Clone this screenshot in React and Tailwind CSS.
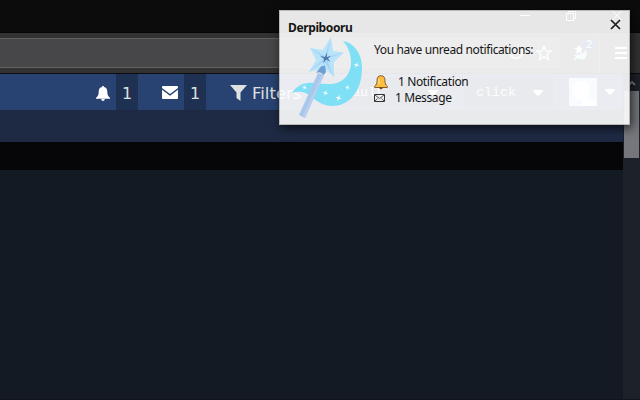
import React from "react";

function Bell({ className }) {
  return (
    <svg viewBox="0 0 14 15" className={className} fill="currentColor">
      <path d="M7 0C7.800 0 8 .5 8 1c2.200.5 3.300 2.200 3.300 4.500 0 3.500.9 5 2.700 6.300v1H0v-1c1.800-1.300 2.700-2.800 2.700-6.300C2.700 3.200 3.800 1.500 6 1c0-.5.2-1 1-1z" />
      <path d="M5.300 13h3.400c0 1.200-.7 2-1.700 2s-1.700-.8-1.700-2z" />
    </svg>
  );
}

function Caret() {
  return (
    <svg width="10" height="6" viewBox="0 0 10 6" className="shrink-0 fill-white">
      <path d="M0 0h10v1L6 5.500H4L0 1z" />
    </svg>
  );
}

function Sparkle({ x, y, s = 1 }) {
  return (
    <path
      transform={`translate(${x} ${y}) rotate(18) scale(${s})`}
      d="M0-3L.6-.6 3 0 .6.6 0 3-.6.6-3 0-.6-.6z"
      fill="#f4fdff"
    />
  );
}

function WandLogo() {
  return (
    <svg width="72" height="82" viewBox="0 0 72 82" className="block">
      <path
        d="M51 4C62 6 70 16 70 31C70 54 57 69 41 69C25 69 19 56 10 55Q5 54 0 56C7 45 18 45 28 46.500C38 47.500 45 48 52 42C63 32 60 14 51 4Z"
        fill="#7fdff5"
      />
      <path d="M26 36L32 38L13 81L7 78Z" fill="#a9c6eb" />
      <path d="M30 37L32 38L13 81L10.500 80Z" fill="#b8d0ef" />
      <path
        d="M39 0L41 14L52 15.500L42 25L42 40L32 31L17 35L24 23L18 11L31 13Z"
        fill="#b8e4fa"
      />
      <path d="M39 0L35 20L52 15.500L35 22L42 40L32 24L17 35L32 21L18 11L33 19Z" fill="#a6d4f5" />
      <path d="M24 36L29 29.500L33 28.500L34 35L31.500 38Q29 34 24 36Z" fill="#6d9fd5" />
      <path
        d="M35 15.500L34.800 20.200L39 18.500L36 21.500L38.500 25L34.200 22.600L31 26.500L32.200 22L28 19L33 20Z"
        fill="#4d78ad"
      />
      <Sparkle x={64.500} y={28} s={1.100} />
      <Sparkle x={55.500} y={50.500} />
      <Sparkle x={46.500} y={61} s={1.200} />
      <Sparkle x={33.500} y={56} s={1.100} />
      <Sparkle x={12.500} y={50.500} />
    </svg>
  );
}

function TitleBar() {
  return (
    <div className="flex h-[33px] shrink-0 justify-end border-b border-[#060606] bg-[#0c0c0c] pr-[18px] pt-[10px] text-white">
      <svg width="106" height="14" viewBox="0 0 106 14" fill="none" stroke="currentColor">
        <path d="M4 5.500h10M50.500 3.500h7v7h-7zM52.500 3v-1.500h7v7h-2M96 .5l10 10M106 .5l-10 10" />
      </svg>
    </div>
  );
}

function Toolbar() {
  return (
    <div className="flex h-[41px] shrink-0 border-b border-[#0c0c0e] bg-[#323232] pt-[5px] text-white">
      <div className="flex h-[30px] w-[559px] items-center justify-end gap-[12px] border border-l-0 border-[#606062] bg-[#474749] pr-[6px]">
        <svg width="16" height="16" viewBox="0 0 16 16" fill="none" stroke="#d0d0d0" strokeWidth="2">
          <path d="M3 4a6 6 0 1 0 10 0M9 7l5-5" />
        </svg>
        <svg width="16" height="16" viewBox="0 0 16 16" fill="none" stroke="#e0e0e0" strokeWidth="1.600">
          <path d="M8 1l2 5h5l-4 3.300 1.500 5.200L8 11.500l-4.500 3L5 9.300 1 6h5z" />
        </svg>
      </div>
      <div className="flex w-[41px] items-start border-r border-[#606062] pl-[14px]">
        <svg width="15" height="17" viewBox="0 0 15 17" className="mt-[7px] shrink-0 fill-[#a8ebff]">
          <path d="M13 5c3 8-3 12-8 8l-4 3 2-5-3-1c5-1 9 1 13-5z" />
          <path d="M6 0l1.500 3 3-.5L8 5l1 4-3-2-3 2 1-4-3-2h3z" fill="#fff" />
        </svg>
        <div className="-ml-[6px] mt-px h-[11px] w-[14px] shrink-0 rounded-[2px] bg-[#173a78] text-center font-['Liberation_Sans',sans-serif] text-[11px] leading-[11px] text-white">
          2
        </div>
      </div>
      <div className="flex flex-col gap-[3px] pl-[15px] pt-[9px]">
        <div className="h-[2px] w-3 bg-white" />
        <div className="h-[2px] w-3 bg-white" />
        <div className="h-[2px] w-3 bg-white" />
      </div>
    </div>
  );
}

function Count() {
  return (
    <div className="flex h-full w-[22px] items-center justify-center bg-[#1e3153] pt-[3px]">1</div>
  );
}

function NavBar() {
  return (
    <div className="flex h-9 shrink-0 items-center bg-[#284371] font-['DejaVu_Sans',sans-serif] text-[16px] text-[#e0e0e0]">
      <div className="flex w-[116px] justify-end pr-[6px] pt-[2px] text-white">
        <Bell className="h-[15px] w-[14px]" />
      </div>
      <Count />
      <div className="flex w-[46px] justify-end pr-[6px]">
        <svg width="16" height="13" viewBox="0 0 16 13" className="fill-white">
          <path d="M1 0h14q1 0 1 1v1L8 8 0 2V1q0-1 1-1zM0 3.700l8 6 8-6V12q0 1-1 1H1q-1 0-1-1z" />
        </svg>
      </div>
      <Count />
      <div className="flex w-[112px] items-center gap-[5px] pl-6 pt-[2px]">
        <svg width="17" height="16" viewBox="0 0 17 16" className="fill-[#e0e0e0]">
          <path d="M0 0h17L10.500 7.500V16L6.500 13V7.500z" />
        </svg>
        <span className="pt-px text-[16.500px] leading-5">Filters</span>
      </div>
      <div className="flex h-7 w-[130px] items-center justify-between bg-[#1e3153] pl-[10px] pr-[10px] pt-px font-['Liberation_Mono',monospace] text-[13.330px] text-[#e0e0e0]">
        <span>Default</span>
        <Caret />
      </div>
      <div className="ml-4 flex h-7 w-[89px] items-center justify-between bg-[#1e3153] pl-3 pr-[10px] pt-px font-['Liberation_Mono',monospace] text-[13.330px] text-[#e0e0e0]">
        <span>click</span>
        <Caret />
      </div>
      <svg width="28" height="28" viewBox="0 0 28 28" className="ml-4 shrink-0 bg-[#c5e5ff]">
        <path d="M4 13C4 6 8 3 13 3s8 4 7 9c-.5 4-2 6-2 9 3 3 8 1 9 5v2H13v-6c-5 0-8-2-9-9z" fill="#fff" />
      </svg>
      <div className="pl-2">
        <Caret />
      </div>
    </div>
  );
}

function ScrollBar() {
  return (
    <div className="flex w-[17px] flex-col border-l border-[#1b202a] bg-[#1d212a] pr-px">
      <div className="flex h-[17px] items-center justify-center">
        <svg width="8" height="6" viewBox="0 0 8 6" fill="none" stroke="#8c8e91" strokeWidth="1.600">
          <path d="M1 5l3-3 3 3" />
        </svg>
      </div>
      <div className="h-[67px] bg-[#75777c]" />
    </div>
  );
}

function Notification() {
  return (
    <div className="absolute left-[279px] top-[10px] h-[115px] w-[351px] border border-[#b9b9b9] bg-white/90 bg-clip-padding font-['Noto_Sans','Open_Sans',sans-serif] text-[12px] tracking-[-0.38px] text-[#151515] shadow-[2px_3px_10px_rgba(0,0,0,0.7)]">
      <div className="flex h-[25px] justify-between pl-2 pr-[8px]">
        <span className="pt-[9px] font-bold leading-4">Derpibooru</span>
        <svg width="11" height="11" viewBox="0 0 11 11" className="mt-[8px]" fill="none" stroke="#1c1c1c" strokeWidth="1.700">
          <path d="M1 1l9 9M10 1L1 10" />
        </svg>
      </div>
      <div className="flex pl-3">
        <div className="pt-px">
          <WandLogo />
        </div>
        <div className="pl-[10px] pt-[6px] leading-4">
          <p className="whitespace-nowrap">You have unread notifications:</p>
          <div className="mt-4 flex items-center gap-[10px]">
            <svg width="14" height="15" viewBox="0 0 14 15" stroke="#5f4320">
              <path d="M5.500 12h3q0 2-1.500 2t-1.500-2z" fill="#d58b1d" />
              <path d="M7 .7c3 0 4 2 4 5 0 3 .6 4 2.300 5.500v1.300H.7v-1.300C2.400 9.700 3 8.700 3 5.700c0-3 1-5 4-5z" fill="#ffbd3c" strokeWidth=".8" />
              <path d="M5 4v5" stroke="#ffe293" />
            </svg>
            <span>1 Notification</span>
          </div>
          <div className="flex items-center gap-[10px]">
            <svg width="11" height="8" viewBox="0 0 11 8" fill="none" stroke="#333">
              <path d="M.5.5h10v7H.5z" />
              <path d="M1 1l4.500 3.500L10 1M1 7l2.500-2.500M10 7L7.500 4.500" strokeWidth=".8" />
            </svg>
            <span>1 Message</span>
          </div>
        </div>
      </div>
    </div>
  );
}

export default function App() {
  return (
    <div className="relative flex h-[400px] w-[640px] flex-col overflow-hidden bg-[#141a23]">
      <TitleBar />
      <Toolbar />
      <div className="flex grow">
        <div className="flex w-[623px] flex-col">
          <NavBar />
          <div className="h-8 bg-[#1e2a44]" />
          <div className="h-7 bg-[#060608]" />
        </div>
        <ScrollBar />
      </div>
      <div className="h-px shrink-0 bg-[#10151c]" />
      <Notification />
    </div>
  );
}
